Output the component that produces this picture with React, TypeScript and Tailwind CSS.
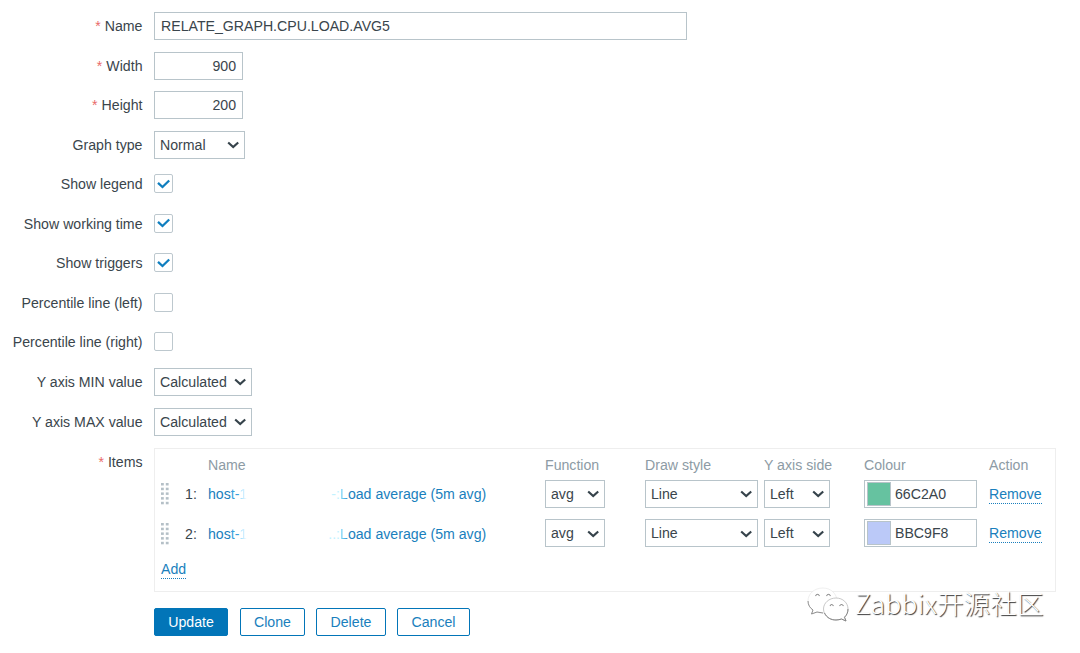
import type { ReactNode } from "react";

const items = [
  { id: 1, color: "66C2A0", swatch: "bg-[#66c2a0]", tail: "-:" },
  { id: 2, color: "BBC9F8", swatch: "bg-[#bbc9f8]", tail: "..:" },
];

function Row({ label, required, children }: { label: string; required?: boolean; children: ReactNode }) {
  return (
    <div className="flex h-[39.55px] items-center">
      <label className="w-[142.5px] shrink-0 text-right whitespace-nowrap">
        {required && <span className="mr-1 text-[#e96a6a]">*</span>}
        {label}
      </label>
      <div className="ml-[11.5px] flex items-center">{children}</div>
    </div>
  );
}

function Select({ value, className }: { value: string; className: string }) {
  return (
    <div className={`flex h-[28px] items-center justify-between border border-[#b8c4ca] bg-white pr-[5px] pl-[5px] ${className}`}>
      <span>{value}</span>
      <svg className="mt-px" width="12" height="8" viewBox="0 0 12 8" fill="none" stroke="#36434b" strokeWidth="2.2">
        <path d="M1.2 1.5 L6.200 6 L11.200 1.5" />
      </svg>
    </div>
  );
}

function Checkbox({ checked }: { checked?: boolean }) {
  return (
    <div className="mb-px flex h-[19px] w-[19px] items-center justify-center rounded-xs border border-[#bdc8ce] bg-white">
      {checked && (
        <svg width="13" height="10" viewBox="0 0 13 10" fill="none" stroke="#0f7ebf" strokeWidth="2.3">
          <path d="M1 3.8 L5.500 8 L12.200 1.5" />
        </svg>
      )}
    </div>
  );
}

function DragHandle() {
  return (
    <svg className="mt-px" width="8" height="22" viewBox="0 0 8 22" fill="#b5c0c7">
      {[0, 4.7, 9.4, 14.1, 18.8].map((y) => (
        <g key={y}>
          <rect x="0" y={y} width="2.8" height="2.5" />
          <rect x="4.8" y={y} width="2.8" height="2.5" />
        </g>
      ))}
    </svg>
  );
}

function Items() {
  const cols = "grid grid-cols-[24px_23px_337px_100px_119px_100px_1fr] items-center";
  return (
    <div className="h-[144px] w-[902px] border border-[#eeeeee] pl-[6px]">
      <div className={`${cols} h-[25px] pt-[7px] text-[#8d9ba5]`}>
        <span />
        <span />
        <span>Name</span>
        <span>Function</span>
        <span>Draw style</span>
        <span>Y axis side</span>
        <span className="flex">
          <span className="w-[125px]">Colour</span>
          <span>Action</span>
        </span>
      </div>
      {items.map((item) => (
        <div key={item.id} className={`${cols} h-[39.55px]`}>
          <DragHandle />
          <span className="pt-px">{item.id}:</span>
          <div className="flex pt-px text-[#1a7fbd]">
            <span className="w-[118px]">
              hos<span className="text-[#3aa0dc]">t-</span>
              <span className="bg-linear-to-r from-[#7fd4ff] to-white bg-clip-text text-transparent">1</span>
            </span>
            <span className="w-[14px] text-right text-[#c2f2ff]">{item.tail}</span>
            <span>
              <span className="bg-linear-to-r from-[#8fe4ff] to-[#2795d3] bg-clip-text text-transparent">L</span>
              oad average (5m avg)
            </span>
          </div>
          <Select value="avg" className="w-[60px]" />
          <Select value="Line" className="w-[113px]" />
          <Select value="Left" className="w-[66px]" />
          <div className="flex items-center">
            <div className="mr-[12px] flex h-[28px] w-[113px] items-center border border-[#b8c4ca] pl-[2px]">
              <span className={`mr-[4px] h-[24px] w-[24px] border border-[#b8c4ca] ${item.swatch}`} />
              {item.color}
            </div>
            <Link>Remove</Link>
          </div>
        </div>
      ))}
      <div className="flex h-[32px] items-center">
        <Link>Add</Link>
      </div>
    </div>
  );
}

function Link({ children }: { children: ReactNode }) {
  return <a className="mt-[2px] border-b border-dotted border-[#1a7fbd] leading-[17px] text-[#1a7fbd]">{children}</a>;
}

function Watermark() {
  return (
    <div className="absolute top-[585px] left-[806px] flex items-center">
      <svg width="43" height="38" viewBox="0 0 43 38" fill="#fff">
        <path d="M17 3 C8 3 2 9 2 16 C2 20 4 23 7 25 L5.5 29 L11 27 C13 27.7 15 28 18 28 C26 28 31 22 31 16 C31 9 25 3 17 3Z" stroke="#e8e8e8" strokeWidth=".7" />
        <path d="M2 16 C2 20 4 23 7 25 L5.5 29 L11 27 L17 28" fill="none" stroke="#858585" strokeWidth=".9" />
        <path d="M30 13 C23 13 17.500 18 17.500 24 C17.500 30 23 35 30 35 C32 35 34 34.500 35.500 34 L40 36 L38.500 32.200 C41 30 42 27 42 24 C42 18 37 13 30 13Z" stroke="#b0b0b0" strokeWidth=".7" />
        <path d="M18.500 28 C21 33 25 35 30 35 C32 35 34 34.500 35.500 34 L40 36 L38.500 32.200 C41 30 42 27 42 24" fill="none" stroke="#858585" strokeWidth="1" />
        <g fill="none" stroke="#8b8b8b" strokeWidth="1.1">
          <path d="M9.500 11 Q11.500 7.500 13.500 11" />
          <path d="M20.500 11 Q22.500 7.500 24.500 11" />
          <path d="M24 21 Q25.500 18 27.500 21" />
          <path d="M33.500 21 Q35.500 18 37.500 21" />
        </g>
      </svg>
      <span className="ml-[6px] -mt-[3px] font-['Noto_Sans_CJK_SC',sans-serif] text-[26.5px] leading-[38px] font-light tracking-[0.2px] whitespace-nowrap text-white [text-shadow:1px_1px_1px_#333]">
        Zabbix开源社区
      </span>
    </div>
  );
}

export default function App() {
  const button = "flex h-[28px] items-center justify-center rounded-xs border border-[#0275b8]";
  return (
    <main className="relative h-[653px] w-[1080px] overflow-hidden bg-white pt-[6.3px] font-['Liberation_Sans',Arial,sans-serif] text-[14.15px] leading-[18px] text-[#3a454c]">
      <Row label="Name" required>
        <div className="flex h-[28px] w-[533px] items-center border border-[#b8c4ca] px-[6px]">RELATE_GRAPH.CPU.LOAD.AVG5</div>
      </Row>
      <Row label="Width" required>
        <div className="flex h-[28px] w-[89px] items-center justify-end border border-[#b8c4ca] px-[6px]">900</div>
      </Row>
      <Row label="Height" required>
        <div className="flex h-[28px] w-[89px] items-center justify-end border border-[#b8c4ca] px-[6px]">200</div>
      </Row>
      <Row label="Graph type">
        <Select value="Normal" className="w-[91px]" />
      </Row>
      <Row label="Show legend"><Checkbox checked /></Row>
      <Row label="Show working time"><Checkbox checked /></Row>
      <Row label="Show triggers"><Checkbox checked /></Row>
      <Row label="Percentile line (left)"><Checkbox /></Row>
      <Row label="Percentile line (right)"><Checkbox /></Row>
      <Row label="Y axis MIN value">
        <Select value="Calculated" className="w-[98px]" />
      </Row>
      <Row label="Y axis MAX value">
        <Select value="Calculated" className="w-[98px]" />
      </Row>
      <div className="flex items-start pt-[6.500px]">
        <label className="mt-[5px] w-[142.5px] shrink-0 text-right">
          <span className="mr-1 text-[#e96a6a]">*</span>
          Items
        </label>
        <div className="ml-[11.5px]">
          <Items />
          <div className="mt-4 flex">
            <button className={`${button} w-[74px] bg-[#0275b8] text-white`}>Update</button>
            <button className={`${button} ml-3 w-[65px] text-[#1a7fbd]`}>Clone</button>
            <button className={`${button} ml-[11px] w-[70px] text-[#1a7fbd]`}>Delete</button>
            <button className={`${button} ml-[11px] w-[73px] text-[#1a7fbd]`}>Cancel</button>
          </div>
        </div>
      </div>
      <Watermark />
    </main>
  );
}
